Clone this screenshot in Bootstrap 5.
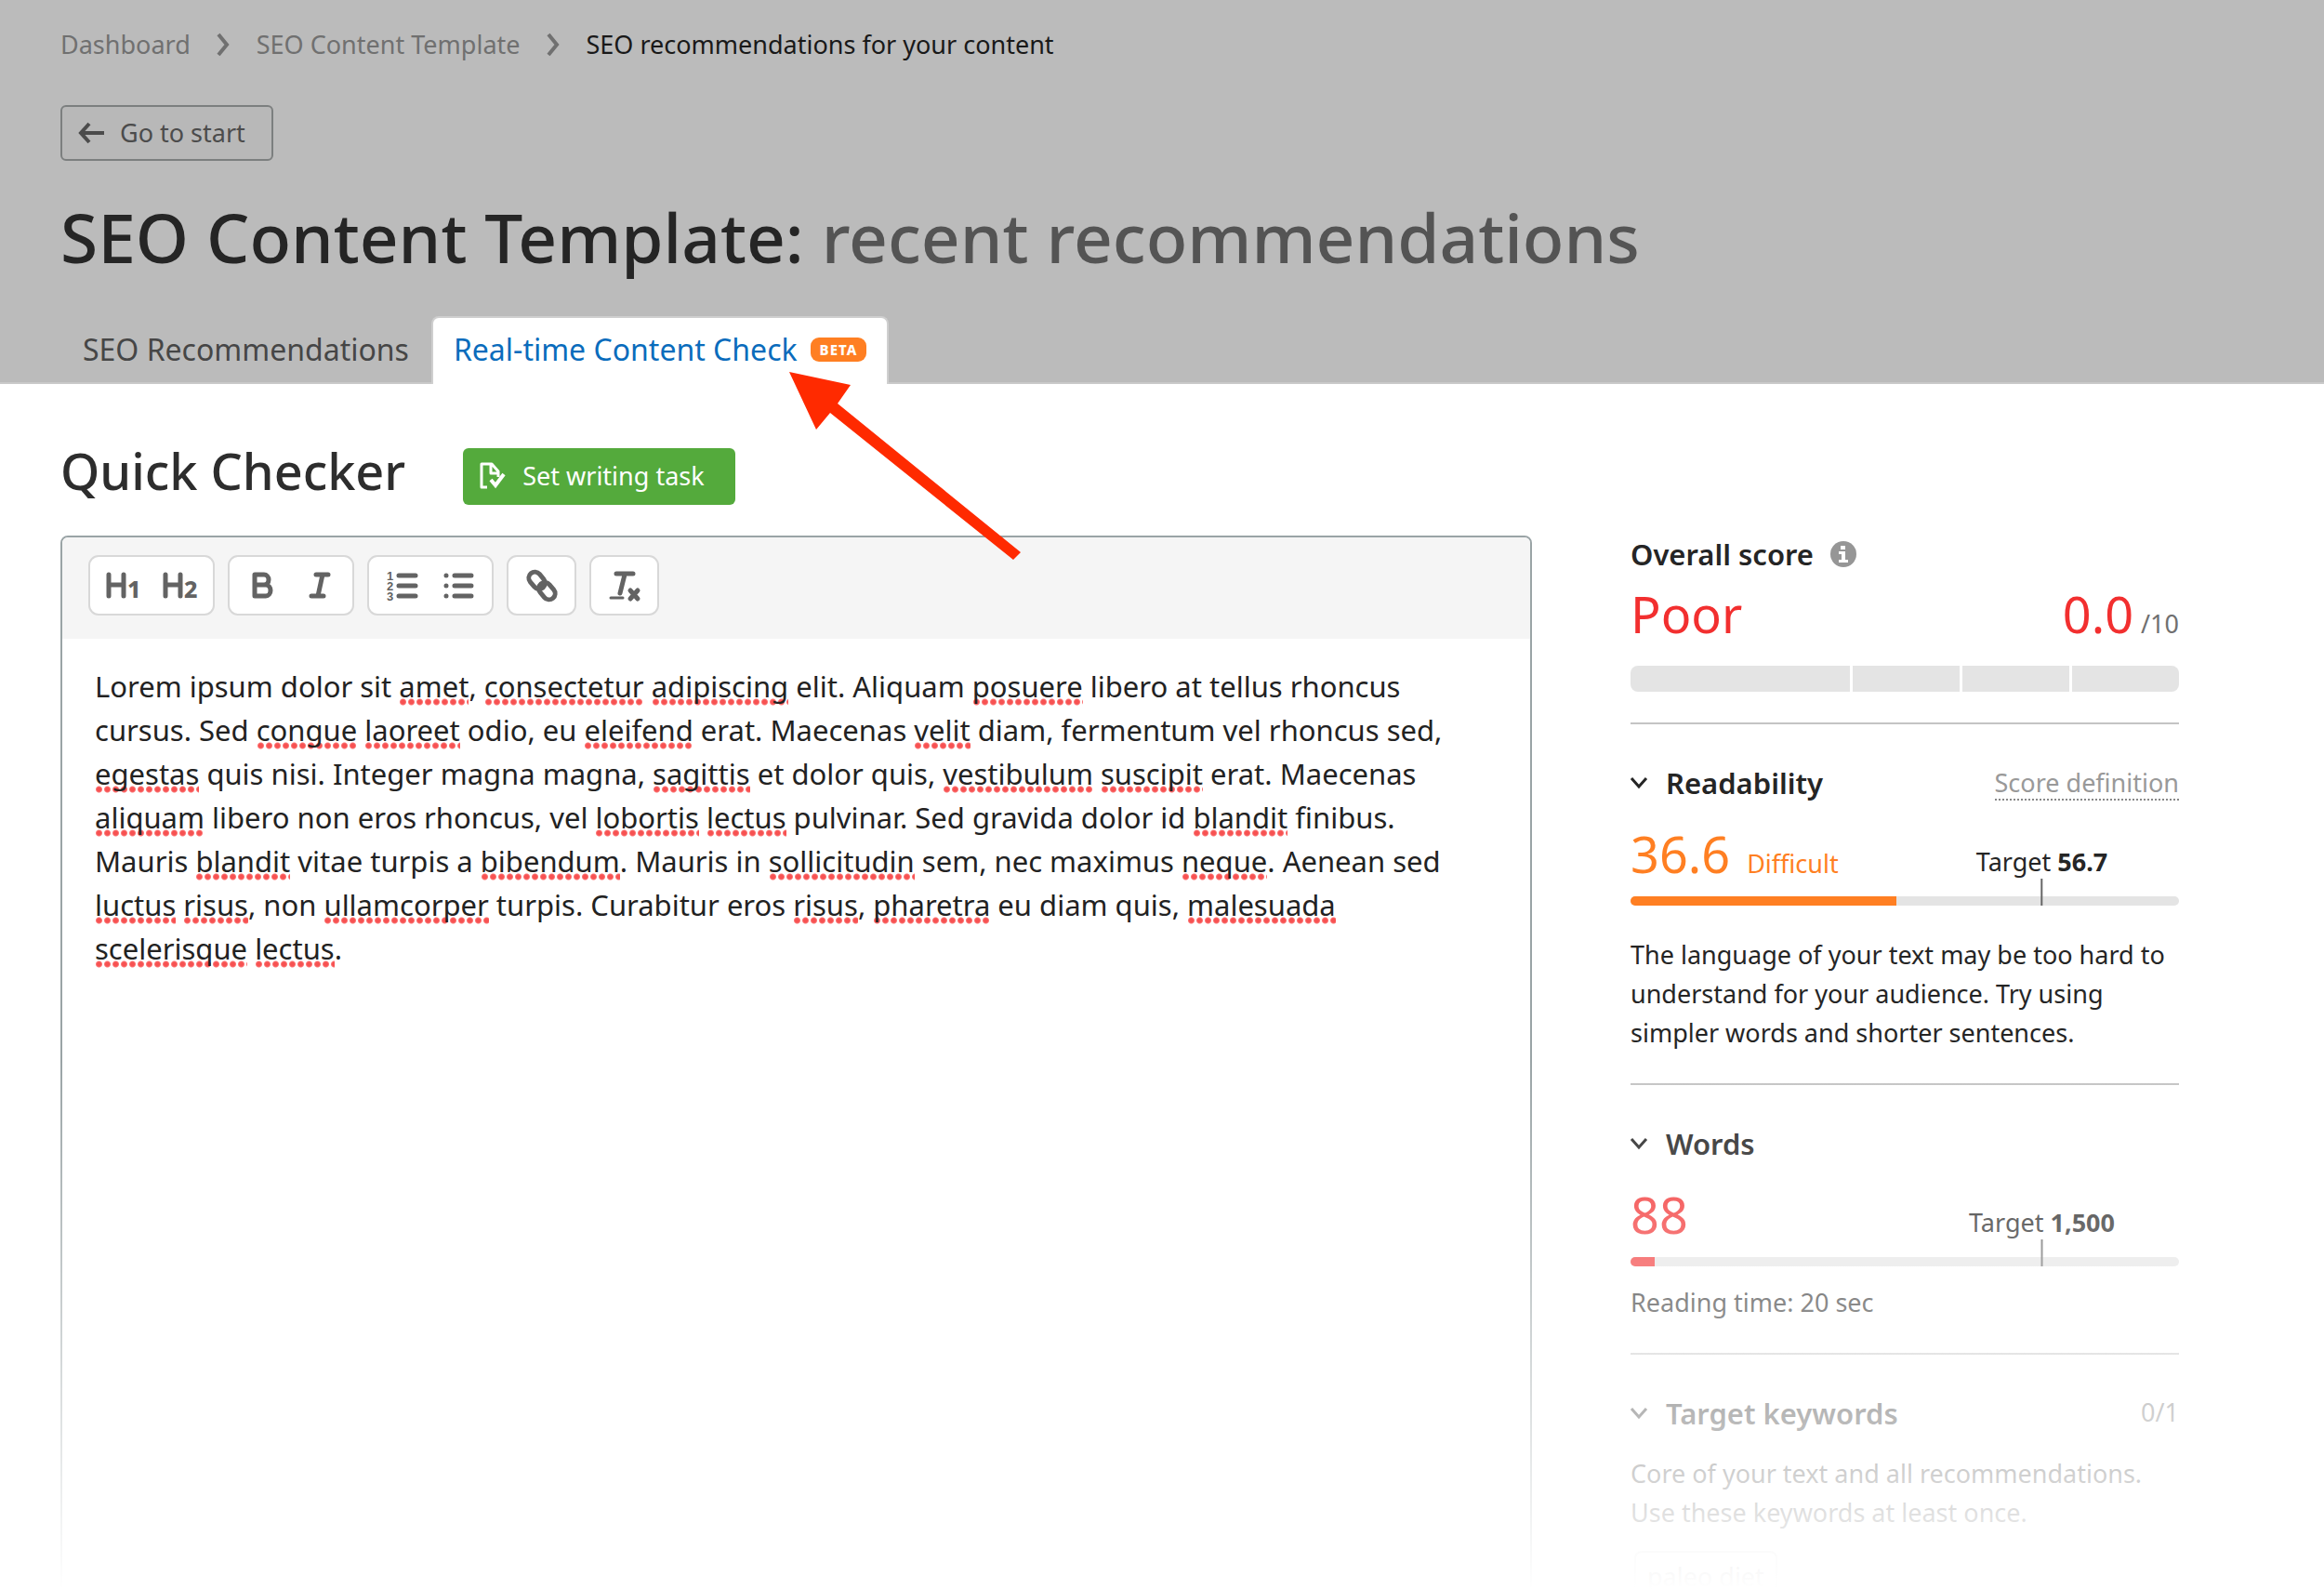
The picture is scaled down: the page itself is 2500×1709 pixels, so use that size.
<!DOCTYPE html>
<html lang="en">
<head>
<meta charset="utf-8">
<meta name="viewport" content="width=device-width, initial-scale=1">
<title>SEO Content Template</title>
<link rel="stylesheet" href="https://cdn.jsdelivr.net/npm/bootstrap@5.3.0/dist/css/bootstrap.min.css">
<style>
  body { font-family: "Noto Sans", "Open Sans", sans-serif; font-size: 27px; line-height: 42px; color: #252525; background: #fff; }
  .app { height: 100vh; overflow: hidden; }
  a { text-decoration: none; }
  svg { display: block; flex: none; overflow: visible; }

  /* header */
  .top { background: #bbb; padding: 29px 65px 0; box-shadow: inset 0 -2px #c9c9c9; }
  .crumbs { line-height: 38px; gap: 26px; }
  .crumbs a { color: #707070; }
  .crumbs li { display: flex; align-items: center; gap: 27px; }
  .crumbs [aria-current] { color: #191919; }
  .btn-back { height: 60px; border: 2px solid #7c7f7f; border-radius: 6px; color: #4c4c4c; background: #b8b8b8; padding: 0 28px 0 16px; gap: 16px; margin-top: 46px; }
  .title { font-size: 73px; line-height: 90px; font-weight: 500; color: #252525; margin: 37px 0 40px; }
  .title span { color: #545454; }
  .tabs .nav-link { height: 73px; padding: 0 22px 3px; border: 2px solid transparent; border-bottom: 0; border-radius: 8px 8px 0 0; font-size: 32px; color: #464646; gap: 14px; }
  .tabs .nav-link.active { background: #fff; color: #0a6cbc; border-color: #cfcfcf; }
  .beta { background: #ff7f22; color: #fff; font-size: 15px; line-height: 26px; font-weight: 800; border-radius: 9px; padding: 0 10px; letter-spacing: 1px; }

  /* main */
  .body-area { padding: 69px 156px 0 65px; }
  .head-row { gap: 62px; }
  .sub { font-size: 54px; line-height: 48px; font-weight: 500; color: #2d2d2d; }
  .btn-task { height: 61px; border: 0; border-radius: 6px; background: #54aa3c; color: #fff; padding: 0 33px 2px 18px; gap: 18px; }
  .cols { margin-top: 33px; gap: 106px; }
  .editor { height: 1200px; border: 2px solid #9aa4a6; border-radius: 8px; overflow: hidden; }
  .tools { background: #f5f5f5; padding: 19px 28px 25px; gap: 14px; }
  .tool-set { height: 65px; border: 2px solid #d8d8d8; border-radius: 11px; background: #fff; padding: 0 5px; }
  .tool-set button { width: 61px; border: 0; background: none; color: #636363; padding: 0; }
  .tool-set svg { margin: auto; }
  .copy { padding: 28px 35px; font-size: 31px; line-height: 47px; outline: 0; color: #222; white-space: nowrap; }
  .copy u { text-decoration: none; background: radial-gradient(circle, #f75252 0 2px, #fb7474 3px, transparent 4px) left bottom / 9px 8px repeat-x; }

  /* score column */
  .scores { width: 590px; flex: none; }
  .scores hr { margin: 33px 0 41px; border-top: 2px solid #c4c4c4; opacity: 1; }
  .overall { font-size: 31px; line-height: 40px; font-weight: 600; gap: 18px; margin-bottom: 12px; }
  .figure-row { height: 64px; gap: 18px; }
  .num { font-size: 54px; line-height: 64px; }
  .bad { color: #f22f2f; }
  .hard { color: #ff7f22; }
  .dim { color: #707070; }
  .seg { height: 28px; border-radius: 8px; overflow: hidden; }
  .seg i { background: #e4e4e4; width: 20%; border-left: 3px solid #fff; }
  .seg i:first-child { width: 40%; border: 0; }
  .sec-head { height: 44px; margin-bottom: 22px; }
  .sec-head button { border: 0; background: none; padding: 0; gap: 20px; font-size: 31px; line-height: 44px; font-weight: 600; color: #252525; }
  .defn { color: #999; line-height: 34px; margin-top: 5px; border-bottom: 2px dotted #888; }
  .gauge { margin-top: 14px; }
  .gauge .progress { height: 10px; border-radius: 5px; background: #e4e4e4; }
  .goal { position: absolute; left: 75%; bottom: 0; transform: translateX(-50%); white-space: nowrap; line-height: 36px; }
  .goal::after { content: ""; display: block; width: 2px; height: 29px; background: #666; margin: 0 auto; }
  .note-lg { margin: 32px 0 0; }
  .note-sm { margin: 18px 0 0; }
  .chip { border: 2px solid #ccc; border-radius: 8px; padding: 5px 12px; margin: 20px 0 0 4px; color: #444; }
  .veil { position: absolute; left: 0; right: 0; bottom: 0; height: 569px; background: linear-gradient(rgba(255,255,255,0), #fff); pointer-events: none; }
  .pointer { position: absolute; left: 849px; top: 400px; pointer-events: none; }
</style>
<script src="https://cdn.jsdelivr.net/npm/bootstrap@5.3.0/dist/js/bootstrap.bundle.min.js"></script>
</head>
<body>
<div class="app position-relative">
  <header class="top">
    <nav aria-label="breadcrumb">
      <ol class="crumbs d-flex list-unstyled mb-0">
        <li><a href="#">Dashboard</a><svg width="18" height="26" viewBox="0 0 18 26" fill="none" stroke="#707070" stroke-width="4"><path d="M3 2l9 11L3 24"/></svg></li>
        <li><a href="#">SEO Content Template</a><svg width="18" height="26" viewBox="0 0 18 26" fill="none" stroke="#707070" stroke-width="4"><path d="M3 2l9 11L3 24"/></svg></li>
        <li aria-current="page">SEO recommendations for your content</li>
      </ol>
    </nav>
    <button type="button" class="btn-back d-inline-flex align-items-center">
      <svg width="30" height="24" viewBox="0 0 30 24" fill="none" stroke="#4c4c4c" stroke-width="4"><path d="M29 12H4M13 2L4 12l9 10"/></svg>Go to start
    </button>
    <h1 class="title">SEO Content Template: <span>recent recommendations</span></h1>
    <ul class="tabs nav">
      <li class="nav-item"><a class="nav-link d-flex align-items-center" href="#">SEO Recommendations</a></li>
      <li class="nav-item"><a class="nav-link active d-flex align-items-center" aria-current="true" href="#">Real-time Content Check <span class="beta">BETA</span></a></li>
    </ul>
  </header>

  <main class="body-area">
    <div class="head-row d-flex align-items-start">
      <h2 class="sub mb-0">Quick Checker</h2>
      <button type="button" class="btn-task d-flex align-items-center">
        <svg width="28" height="30" viewBox="0 0 28 30" fill="none" stroke="#fff"><path stroke-width="3" stroke-linejoin="round" d="M8 27H2V2h11l7 8v6M12 2v10h8"/><path stroke-width="4" d="M12 19l5 6 9-12"/></svg>Set writing task
      </button>
    </div>

    <div class="cols d-flex align-items-start">
      <section class="editor flex-grow-1">
        <div class="tools d-flex" role="toolbar" aria-label="Formatting">
          <div class="tool-set d-flex">
            <button type="button" aria-label="Heading 1"><svg width="40" height="36" viewBox="0 0 40 36" fill="none" stroke="currentColor" stroke-width="5" stroke-linecap="round"><path d="M4 6v23M20 6v23M4 17h16"/><text x="24" y="31" font-size="25" font-weight="800" fill="currentColor" stroke="none">1</text></svg></button>
            <button type="button" aria-label="Heading 2"><svg width="40" height="36" viewBox="0 0 40 36" fill="none" stroke="currentColor" stroke-width="5" stroke-linecap="round"><path d="M4 6v23M20 6v23M4 17h16"/><text x="24" y="31" font-size="25" font-weight="800" fill="currentColor" stroke="none">2</text></svg></button>
          </div>
          <div class="tool-set d-flex">
            <button type="button" aria-label="Bold"><svg width="36" height="36" viewBox="0 0 36 36" fill="none" stroke="currentColor" stroke-width="5" stroke-linejoin="round"><path d="M9 6h10a5 5.500 0 0 1 0 11H9zM9 17h12a5 6 0 0 1 0 12H9z"/></svg></button>
            <button type="button" aria-label="Italic"><svg width="36" height="36" viewBox="0 0 36 36" fill="none" stroke="currentColor" stroke-width="5" stroke-linecap="round"><path d="M14 6h13M9 29h13M21 6l-5 23"/></svg></button>
          </div>
          <div class="tool-set d-flex">
            <button type="button" aria-label="Numbered list"><svg width="36" height="36" viewBox="0 0 36 36" fill="none" stroke="currentColor" stroke-width="5" stroke-linecap="round"><path d="M14 7h18M14 18h18M14 29h18"/><g fill="currentColor" stroke="none" font-family="Liberation Sans, sans-serif" font-size="13" font-weight="700"><text x="1" y="12">1</text><text x="1" y="23">2</text><text x="1" y="34">3</text></g></svg></button>
            <button type="button" aria-label="Bulleted list"><svg width="36" height="36" viewBox="0 0 36 36" fill="none" stroke="currentColor" stroke-width="5" stroke-linecap="round"><path d="M13 7h18M13 18h18M13 29h18M4 7h0M4 18h0M4 29h0"/></svg></button>
          </div>
          <div class="tool-set d-flex">
            <button type="button" aria-label="Link"><svg width="36" height="36" viewBox="0 0 36 36" fill="none" stroke="currentColor" stroke-width="5"><rect x="3" y="6" width="20" height="13" rx="6.500" transform="rotate(50 13 12)"/><rect x="13" y="17" width="20" height="13" rx="6.500" transform="rotate(50 23 24)"/></svg></button>
          </div>
          <div class="tool-set d-flex">
            <button type="button" aria-label="Clear formatting"><svg width="36" height="36" viewBox="0 0 36 36" fill="none" stroke="currentColor" stroke-width="5" stroke-linecap="round"><path d="M9 5h18M18 6l-5 20M24 23l8 9M32 23l-8 9"/><path stroke-width="3" d="M3 31h13"/></svg></button>
          </div>
        </div>
        <div class="copy" contenteditable="true" spellcheck="false" role="textbox" aria-multiline="true" aria-label="Text to check">Lorem ipsum dolor sit <u>amet</u>, <u>consectetur</u> <u>adipiscing</u> elit. Aliquam <u>posuere</u> libero at tellus rhoncus<br>cursus. Sed <u>congue</u> <u>laoreet</u> odio, eu <u>eleifend</u> erat. Maecenas <u>velit</u> diam, fermentum vel rhoncus sed,<br><u>egestas</u> quis nisi. Integer magna magna, <u>sagittis</u> et dolor quis, <u>vestibulum</u> <u>suscipit</u> erat. Maecenas<br><u>aliquam</u> libero non eros rhoncus, vel <u>lobortis</u> <u>lectus</u> pulvinar. Sed gravida dolor id <u>blandit</u> finibus.<br>Mauris <u>blandit</u> vitae turpis a <u>bibendum</u>. Mauris in <u>sollicitudin</u> sem, nec maximus <u>neque</u>. Aenean sed<br><u>luctus</u> <u>risus</u>, non <u>ullamcorper</u> turpis. Curabitur eros <u>risus</u>, <u>pharetra</u> eu diam quis, <u>malesuada</u><br><u>scelerisque</u> <u>lectus</u>.</div>
      </section>

      <aside class="scores">
        <div class="overall d-flex align-items-center">Overall score
          <svg width="28" height="28" viewBox="0 0 28 28"><circle cx="14" cy="14" r="14" fill="#969696"/><path fill="#fff" d="M11 5h5v4h-5zM9 11h7v9h3v3H9v-3h3v-6H9z"/></svg>
        </div>
        <div class="figure-row d-flex align-items-baseline gap-2">
          <span class="num bad me-auto">Poor</span>
          <span class="num bad">0.0</span>
          <span class="dim">/10</span>
        </div>
        <div class="seg d-flex mt-4"><i></i><i></i><i></i><i></i></div>
        <hr>

        <section>
          <div class="sec-head d-flex justify-content-between">
            <button type="button" class="d-flex align-items-center" aria-expanded="true"><svg width="18" height="14" viewBox="0 0 18 14" fill="none" stroke="#252525" stroke-width="3"><path d="M1 2l8 9 8-9"/></svg>Readability</button>
            <a class="defn align-self-start" href="#">Score definition</a>
          </div>
          <div class="figure-row hard d-flex align-items-baseline"><span class="num">36.6</span><span>Difficult</span></div>
          <div class="gauge position-relative">
            <div class="progress"><div class="progress-bar" style="width:48.4%;background:#ff7f22"></div></div>
            <div class="goal">Target <b>56.7</b></div>
          </div>
          <p class="note-lg">The language of your text may be too hard to<br>understand for your audience. Try using<br>simpler words and shorter sentences.</p>
        </section>
        <hr>

        <section>
          <div class="sec-head d-flex">
            <button type="button" class="d-flex align-items-center" aria-expanded="true"><svg width="18" height="14" viewBox="0 0 18 14" fill="none" stroke="#252525" stroke-width="3"><path d="M1 2l8 9 8-9"/></svg>Words</button>
          </div>
          <div class="figure-row bad d-flex align-items-baseline"><span class="num">88</span></div>
          <div class="gauge position-relative">
            <div class="progress"><div class="progress-bar" style="width:4.4%;background:#f22f2f"></div></div>
            <div class="goal">Target <b>1,500</b></div>
          </div>
          <p class="note-sm">Reading time: 20 sec</p>
        </section>
        <hr>

        <section>
          <div class="sec-head d-flex justify-content-between">
            <button type="button" class="d-flex align-items-center" aria-expanded="true"><svg width="18" height="14" viewBox="0 0 18 14" fill="none" stroke="#252525" stroke-width="3"><path d="M1 2l8 9 8-9"/></svg>Target keywords</button>
            <span class="dim">0/1</span>
          </div>
          <p class="mb-0">Core of your text and all recommendations.<br>Use these keywords at least once.</p>
          <span class="chip d-inline-block">paleo diet</span>
        </section>
      </aside>
    </div>
  </main>

  <div class="veil"></div>
  <svg class="pointer" width="250" height="204" viewBox="0 0 250 204" fill="#ff2a00" aria-hidden="true"><path d="M0 0L66 14 52 34 249 194 241 202 44 44 29 62z"/></svg>
</div>
</body>
</html>
